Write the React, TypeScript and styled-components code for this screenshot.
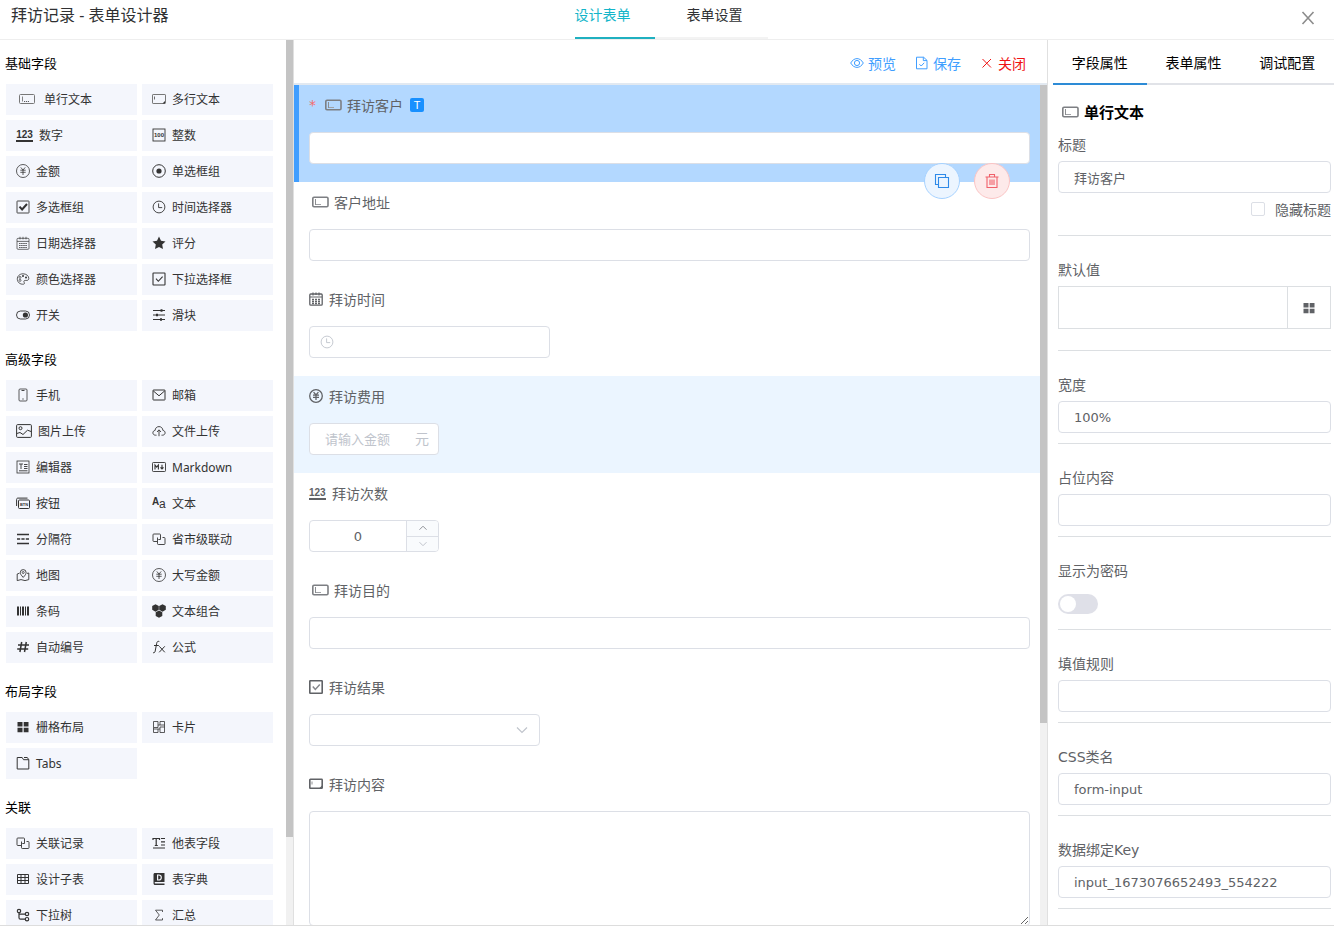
import React, { ReactNode } from 'react';
import styled, { createGlobalStyle, css } from 'styled-components';

const sans = `"Noto Sans", "Noto Sans CJK SC", sans-serif`;
const wide = `"DejaVu Sans", "Noto Sans CJK SC", sans-serif`;

const GlobalStyle = createGlobalStyle`
  *, *::before, *::after { box-sizing: border-box; }
  body { margin: 0; background: #fff; color: #303133; font-family: ${sans}; font-size: 14px; }
  h1, h2, h3, ul { margin: 0; padding: 0; font-weight: 400; }
  button, input, select, textarea { font: inherit; color: inherit; margin: 0; }
  button { cursor: pointer; }
`;

/* ---------- icons ---------- */

const Svg = styled.svg`
  display: block;
  flex: none;
  overflow: visible;
  fill: none;
  stroke: currentColor;
  stroke-width: 1;
`;

const solid = { fill: 'currentColor', stroke: 'none' };
const label = { fontFamily: 'Liberation Sans', fontWeight: 700 };

type Glyph = { w: number; h: number; body: ReactNode };

const glyphs: Record<string, Glyph> = {
  line: {
    w: 17, h: 12,
    body: (
      <>
        <rect x=".5" y="1.5" width="15" height="9" rx="1" stroke="#777" />
        <path d="M3.5 3.5v5" stroke="#777" strokeWidth=".9" />
        <path d="M5 8.5h5" strokeWidth=".8" strokeDasharray="1.2 .8" />
      </>
    ),
  },
  lineBold: {
    w: 17, h: 12,
    body: (
      <>
        <rect x=".8" y="1.3" width="15.2" height="9.4" rx="1.2" stroke="#7d7f83" strokeWidth="1.6" />
        <path d="M3.5 3v6" stroke="#8b8d91" />
        <path d="M4 8.5h5" stroke="#a0a2a6" />
      </>
    ),
  },
  area: {
    w: 14, h: 12,
    body: (
      <>
        <rect x=".5" y="1.5" width="13" height="9" rx=".6" stroke="#777" />
        <path d="M2.5 3.5v3" strokeWidth=".7" />
        <path d="M13 8v2.5h-2.5z" {...solid} />
      </>
    ),
  },
  areaBold: {
    w: 14, h: 12,
    body: (
      <>
        <rect x=".8" y="1.3" width="12.4" height="9" rx=".6" strokeWidth="1.6" />
        <path d="M3 3.5v3" strokeWidth=".7" />
        <path d="M13 7.5v3h-3z" {...solid} />
      </>
    ),
  },
  hundred: {
    w: 14, h: 14,
    body: (
      <>
        <rect x="1" y="1" width="12" height="12" strokeWidth=".9" />
        <text x="7" y="9.2" textAnchor="middle" fontSize="6" {...label} {...solid}>100</text>
      </>
    ),
  },
  yen: {
    w: 14, h: 14,
    body: (
      <>
        <circle cx="7" cy="7" r="6.5" strokeWidth=".8" />
        <path d="M4.8 3.4 7 6l2.2-2.6M7 6v5M4.3 6.2h5.4M4.3 8.3h5.4" strokeWidth=".8" />
      </>
    ),
  },
  yenBold: {
    w: 14, h: 14,
    body: (
      <>
        <circle cx="7" cy="7" r="6.3" strokeWidth="1.3" />
        <path d="M4.6 3.2 7 6l2.4-2.8M7 6v5M4 6.2h6M4 8.3h6" strokeWidth="1.3" />
      </>
    ),
  },
  radio: {
    w: 14, h: 14,
    body: (
      <>
        <circle cx="7" cy="7" r="6.3" />
        <circle cx="7" cy="7" r="2.6" {...solid} />
      </>
    ),
  },
  check: {
    w: 14, h: 14,
    body: (
      <>
        <rect x="1" y="1" width="12" height="12" rx=".5" strokeWidth=".9" />
        <path d="m3.5 6.6 2.6 2.8L11 4" strokeWidth="2" />
      </>
    ),
  },
  clock: {
    w: 14, h: 14,
    body: (
      <>
        <circle cx="7" cy="7" r="5.9" strokeWidth=".9" />
        <path d="M6.6 3.4v4.2h3.6" strokeWidth=".9" />
      </>
    ),
  },
  calendar: {
    w: 14, h: 14,
    body: (
      <>
        <rect x="1" y="2.3" width="12" height="11" rx="1" strokeWidth=".7" />
        <path d="M1 5.4h12M4 .8v2.6M7 .8v2.6M10 .8v2.6" strokeWidth=".7" />
        <path d="M3 7.5h8M3 9.5h8M3 11.5h8" strokeWidth=".8" strokeDasharray="1.6 .5" />
      </>
    ),
  },
  calendarBold: {
    w: 14, h: 14,
    body: (
      <>
        <rect x=".8" y="2" width="12.4" height="11.2" rx="1" strokeWidth="1.3" />
        <path d="M1 5h12M4 .5v3M10 .5v3M7 .5v2.5" strokeWidth="1.2" />
        <path d="M3 7.5h8M3 9.5h8M3 11.5h8" strokeWidth="1.3" strokeDasharray="2 1" />
      </>
    ),
  },
  star: {
    w: 14, h: 14,
    body: <path d="m7 .6 2 4.2 4.5.6-3.3 3.2.8 4.5L7 10.9l-4 2.2.8-4.5L.5 5.4 5 4.8z" {...solid} />,
  },
  palette: {
    w: 14, h: 14,
    body: (
      <>
        <path d="M7.6 12.2C4 12.6 1.4 10.2 1.3 7.2 1.2 4 3.8 1.8 7 1.8s5.8 2 5.8 4.6c0 1.9-1.5 2.2-3 2-1.7-.2-2.3.8-1.7 1.8.5.9.5 1.8-.5 2z" strokeWidth=".8" />
        <circle cx="4" cy="8.4" r="1" strokeWidth=".7" />
        <circle cx="4" cy="5.4" r="1" strokeWidth=".7" />
        <circle cx="7" cy="4" r="1" {...solid} />
        <circle cx="10" cy="5.4" r="1" {...solid} />
      </>
    ),
  },
  checkThin: {
    w: 14, h: 14,
    body: (
      <>
        <rect x="1" y="1" width="12" height="12" rx=".5" strokeWidth="1.1" />
        <path d="m4 6.7 2.3 2.6 4.3-4.7" strokeWidth="1.1" />
      </>
    ),
  },
  checkGrey: {
    w: 14, h: 14,
    body: (
      <>
        <rect x=".8" y=".8" width="12.4" height="12.4" rx=".5" strokeWidth="1.6" />
        <path d="m3.8 6.6 2.5 2.8 4.5-5" stroke="#85878c" strokeWidth="1.5" />
      </>
    ),
  },
  toggle: {
    w: 14, h: 14,
    body: (
      <>
        <rect x=".5" y="3" width="13" height="8" rx="4" strokeWidth=".9" />
        <circle cx="9.4" cy="7" r="2.6" {...solid} />
      </>
    ),
  },
  slider: {
    w: 14, h: 14,
    body: (
      <>
        <path d="M1 2.5h12M1 7h12M1 11.5h12" />
        <path d="M8.5 1.2h2v2.6h-2zM4 5.7h2v2.6H4zM8 10.2h2v2.6H8z" {...solid} />
      </>
    ),
  },
  phone: {
    w: 14, h: 14,
    body: (
      <>
        <rect x="3" y="1" width="8" height="12" rx="1" strokeWidth=".8" />
        <path d="M5.5 2.5h3M6.3 11h1.4" strokeWidth=".9" />
      </>
    ),
  },
  mail: {
    w: 14, h: 14,
    body: (
      <>
        <rect x="1" y="2" width="12" height="10" rx=".5" />
        <path d="m1.2 2.8 5.8 5 5.8-5" />
      </>
    ),
  },
  image: {
    w: 16, h: 14,
    body: (
      <>
        <rect x=".6" y=".6" width="14.8" height="12.8" rx="1" />
        <circle cx="4.5" cy="4.2" r="1.5" />
        <path d="m.8 9.5 3.2-1 3 2 4.5-4.3 3.8 1.4" />
      </>
    ),
  },
  cloud: {
    w: 14, h: 14,
    body: (
      <>
        <path d="M4.5 11.2H3.6C2 11.2.9 10.2.9 8.8c0-1.3.9-2.2 2.2-2.4C3.2 4.2 4.8 2.6 7 2.6s3.8 1.6 3.9 3.8c1.3.2 2.2 1.1 2.2 2.4 0 1.4-1.1 2.4-2.7 2.4h-.9" strokeWidth=".9" />
        <path d="M7 12.2V6M5 8l2-2.2L9 8" strokeWidth=".9" />
      </>
    ),
  },
  editor: {
    w: 14, h: 14,
    body: (
      <>
        <rect x="1" y="1" width="12" height="12" strokeWidth=".8" />
        <path d="M3 4h4M5 4v5M8 4.5h3.5M8 6.5h3.5M8 8.5h3.5M3 10.8h8.5" strokeWidth=".9" />
      </>
    ),
  },
  markdown: {
    w: 14, h: 14,
    body: (
      <>
        <rect x=".5" y="2.5" width="13" height="9" rx=".8" strokeWidth=".9" />
        <path d="M3 9.5V5l1.7 2.2L6.4 5v4.5M10 4.7v4.2M8.5 7.4 10 9l1.5-1.6" strokeWidth="1.1" />
      </>
    ),
  },
  btn: {
    w: 14, h: 14,
    body: (
      <>
        <path d="M.6 10V3.5c0-1 .5-1.4 1.4-1.4h9.5" />
        <rect x="2.5" y="4" width="11" height="8.5" rx="1" />
        <text x="8" y="10" textAnchor="middle" fontSize="4" {...label} {...solid}>BTN</text>
      </>
    ),
  },
  aa: {
    w: 14, h: 16,
    body: (
      <>
        <text x="0" y="10" fontSize="10" fontFamily="Liberation Sans" fontWeight="700" {...solid}>A</text>
        <text x="7" y="13" fontSize="12" fontFamily="Liberation Sans" {...solid}>a</text>
      </>
    ),
  },
  divider: {
    w: 14, h: 14,
    body: (
      <>
        <path d="M1 2.5h12M1 11.5h12" strokeWidth="1.4" />
        <path d="M1 7h12" strokeWidth="1.4" strokeDasharray="3.2 1.2" />
      </>
    ),
  },
  linkage: {
    w: 14, h: 14,
    body: (
      <path
        d="M5 9.5H1.8c-.5 0-.8-.3-.8-.8V2.8c0-.5.3-.8.8-.8h5.9c.5 0 .8.3.8.8v4.7H6.3M10.500 5.500h1.700c.5 0 .8.300.8.800v5.400c0 .5-.3.800-.8.800H6.300c-.5 0-.8-.3-.8-.8V5.500"
        strokeWidth=".9"
      />
    ),
  },
  map: {
    w: 14, h: 14,
    body: (
      <>
        <path d="M3.5 5.2 1.2 6v6.6l3.8-1 4 1 3.800-1V5l-1.800.4" strokeWidth=".9" />
        <path d="M7.2 9.4C5 7 4.3 5.900 4.300 4.500a2.900 2.900 0 0 1 5.800 0c0 1.400-.7 2.500-2.900 4.900z" strokeWidth=".9" />
        <circle cx="7.2" cy="4.5" r="1" strokeWidth=".8" />
      </>
    ),
  },
  barcode: {
    w: 14, h: 14,
    body: <path d="M1 2.5h2v9H1zM4 2.5h1v9H4zM6 2.5h2v9H6zM9 2.5h1v9H9zM11 2.5h2v9h-2z" {...solid} />,
  },
  combo: {
    w: 14, h: 14,
    body: (
      <path
        d="m3.5.3 3.3 1.8v3.7L3.5 7.7.2 5.8V2.1zM10.5.3l3.3 1.8v3.7l-3.3 1.9-3.3-1.9V2.1zM7 6.5l3.3 1.8V12L7 13.8 3.7 12V8.3z"
        {...solid}
      />
    ),
  },
  hash: {
    w: 14, h: 14,
    body: <path d="M5.7 2 3.9 12M10.3 2 8.5 12M2 5h11M1.2 9h11" strokeWidth="1.5" />,
  },
  fx: {
    w: 14, h: 14,
    body: (
      <>
        <path d="M7.3 1.5C5.7.9 5 1.8 4.7 3.3L3.2 11c-.3 1.5-1 2.1-2.2 1.6M2 5.5h4.8" />
        <path d="m7.3 6.3 5.5 6M12.8 6.3l-5.6 6" />
      </>
    ),
  },
  grid: {
    w: 14, h: 14,
    body: <path d="M1.5 2h5v4.5h-5zM7.7 2h4.8v4.5H7.7zM1.5 7.7h5v4.5h-5zM7.7 7.7h4.8v4.5H7.7z" {...solid} />,
  },
  card: {
    w: 14, h: 14,
    body: (
      <path
        d="M1.5 1.5H6v6H1.5zM8 1.5h4.5V5H8zM1.5 9H6v3.5H1.5zM8 7h4.5v5.5H8zM1.5 7.5V9M12.5 5v2M6 5h2M6 9h2"
        strokeWidth=".8"
      />
    ),
  },
  tabs: {
    w: 14, h: 14,
    body: <path d="M1.2 1.5h5l1.3 2.2h5.3V13H1.2zM8 1.5h3.3l1.5 2.2" />,
  },
  tfield: {
    w: 14, h: 14,
    body: (
      <>
        <path d="M1 4V2.5h6.5V4M4.2 2.5v7M2.8 9.5h3M1 12h12" strokeWidth="1.2" />
        <path d="M9 2.5h4M9 5.8h4M9 9h4" strokeWidth="1.2" />
      </>
    ),
  },
  table: {
    w: 14, h: 14,
    body: <path d="M1.5 2.5h11v9h-11zM1.5 5.5h11M1.5 8.5h11M5 2.5v9M9 2.5v9" />,
  },
  dict: {
    w: 14, h: 14,
    body: (
      <>
        <path d="M3 1h9.5v9H3.3c-.9 0-.9 1.4 0 1.4h9.2V13H3.2c-1 0-1.7-.7-1.7-1.8V2.6C1.5 1.6 2 1 3 1z" {...solid} />
        <path d="M5.6 3v5h1.2c1.7 0 2.5-.9 2.5-2.5S8.5 3 6.8 3z" stroke="#f4f5fb" strokeWidth="1.2" />
      </>
    ),
  },
  tree: {
    w: 14, h: 14,
    body: (
      <>
        <circle cx="3" cy="3" r="1.7" strokeWidth="1.2" />
        <circle cx="11" cy="6" r="1.7" strokeWidth="1.2" />
        <circle cx="11" cy="11.2" r="1.7" strokeWidth="1.2" />
        <path d="M3 4.7v5c0 1 .5 1.5 1.5 1.5h4.8M3 6.2h6.3" strokeWidth="1.2" />
      </>
    ),
  },
  sum: {
    w: 14, h: 14,
    body: <path d="M10.5 4V2.2h-7L7.3 7l-3.8 5h7v-1.8" strokeWidth=".8" />,
  },
  eye: {
    w: 14, h: 14,
    body: (
      <>
        <path d="M.7 7C2.3 4.2 4.5 2.6 7 2.6s4.7 1.6 6.3 4.4c-1.6 2.8-3.8 4.4-6.3 4.4S2.3 9.8.7 7z" />
        <circle cx="7" cy="7" r="2.6" />
      </>
    ),
  },
  save: {
    w: 14, h: 14,
    body: <path d="M1.5 1.2h7.1L12 4.4v8.4H1.5zM8.3 1.2v3.4H12M4.4 8.2 6.200 10l3-3.2" />,
  },
  cross: { w: 14, h: 14, body: <path d="m2.5 3 8.5 8.5M11 3l-8.500 8.500" /> },
  close: { w: 14, h: 14, body: <path d="m1.5 1 11 12M12.5 1l-11 12" strokeWidth="1.6" /> },
  copy: {
    w: 16, h: 16,
    body: <path d="M4.5 4.5h10v10h-10zM4.5 11.5h-3v-10h10v3" strokeWidth="1.1" />,
  },
  trash: {
    w: 16, h: 16,
    body: <path d="M1.5 4h13M5.5 3.8V1.5h5v2.3M3 4v10.5h10V4M6 6.5V12M8 6.5V12M10 6.5V12" strokeWidth="1.1" />,
  },
  up: { w: 10, h: 6, body: <path d="m1.5 4.7 3.5-3.5 3.5 3.5" /> },
  down: { w: 10, h: 6, body: <path d="m1.5 1.2 3.5 3.5 3.5-3.5" /> },
  chevron: { w: 12, h: 8, body: <path d="m1 1.5 5 5 5-5" strokeWidth="1.2" /> },
};

const Digits = styled.span`
  width: 17px;
  border-bottom: 2px solid currentColor;
  font: 700 10px/11px "Liberation Sans", sans-serif;
`;

function Icon({ name }: { name: string }) {
  if (name === 'digits') return <Digits aria-hidden="true">123</Digits>;
  const { w, h, body } = glyphs[name];
  return (
    <Svg width={w} height={h} viewBox={`0 0 ${w} ${h}`} aria-hidden="true">
      {body}
    </Svg>
  );
}

/* ---------- shell ---------- */

const Shell = styled.div`
  display: flex;
  flex-direction: column;
  height: 100vh;
  padding-bottom: 5px;
  overflow: hidden;
`;

const Header = styled.header`
  display: grid;
  grid-template-columns: 1fr auto 1fr;
  flex: none;
  height: 40px;
  border-bottom: 1px solid #eee;
`;

const Title = styled.h1`
  padding-left: 11px;
  font-size: 16px;
  line-height: 30px;
`;

const ModeTabs = styled.div`
  display: flex;
  padding-left: 8px;
`;

const ModeTab = styled.button<{ $active?: boolean }>`
  height: 39px;
  padding: ${(p) => (p.$active ? '0 24px 9px 0' : '0 25px 9px 32px')};
  border: 0;
  border-bottom: 2px solid ${(p) => (p.$active ? '#1fb0c0' : '#f3f3f3')};
  background: none;
  color: ${(p) => (p.$active ? '#13b5c9' : '#303133')};
`;

const CloseButton = styled.button`
  justify-self: end;
  display: flex;
  padding: 11px 19px 0 0;
  border: 0;
  background: none;
  color: #8c8c8c;
`;

const Body = styled.div`
  display: flex;
  flex: 1;
  min-height: 0;
  border-bottom: 1px solid #ddd;
`;

const Track = styled.div`
  flex: none;
  width: 7px;
  background: #f1f1f1;
`;

const Thumb = styled.div<{ $share: number }>`
  height: ${(p) => p.$share}%;
  background: #c4c4c4;
`;

/* ---------- palette ---------- */

const Sidebar = styled.aside`
  display: flex;
  flex: none;
  width: 294px;
  border-right: 1px solid #e0e0e0;
`;

const Palette = styled.nav`
  display: flex;
  flex: 1;
  flex-direction: column;
  gap: 18px;
  padding: 13px 13px 0 6px;
  overflow: hidden;
`;

const Group = styled.section`
  flex: none;
`;

const GroupTitle = styled.h2`
  margin: 0 0 11px -1px;
  color: #000;
  font-size: 13px;
  line-height: 20px;
`;

const Items = styled.ul`
  display: grid;
  grid-template-columns: 1fr 1fr;
  gap: 5px;
  list-style: none;
`;

const Item = styled.button<{ $loose?: boolean }>`
  display: flex;
  align-items: center;
  gap: ${(p) => (p.$loose ? 8 : 6)}px;
  width: 100%;
  height: 31px;
  padding: 0 0 1px ${(p) => (p.$loose ? 13 : 10)}px;
  border: 0;
  background: #f4f6fc;
  color: #333;
  font-size: 12px;
  white-space: nowrap;
`;

const groups: { title: string; items: [string, string][] }[] = [
  {
    title: '基础字段',
    items: [
      ['line', '单行文本'], ['area', '多行文本'], ['digits', '数字'], ['hundred', '整数'],
      ['yen', '金额'], ['radio', '单选框组'], ['check', '多选框组'], ['clock', '时间选择器'],
      ['calendar', '日期选择器'], ['star', '评分'], ['palette', '颜色选择器'], ['checkThin', '下拉选择框'],
      ['toggle', '开关'], ['slider', '滑块'],
    ],
  },
  {
    title: '高级字段',
    items: [
      ['phone', '手机'], ['mail', '邮箱'], ['image', '图片上传'], ['cloud', '文件上传'],
      ['editor', '编辑器'], ['markdown', 'Markdown'], ['btn', '按钮'], ['aa', '文本'],
      ['divider', '分隔符'], ['linkage', '省市级联动'], ['map', '地图'], ['yen', '大写金额'],
      ['barcode', '条码'], ['combo', '文本组合'], ['hash', '自动编号'], ['fx', '公式'],
    ],
  },
  { title: '布局字段', items: [['grid', '栅格布局'], ['card', '卡片'], ['tabs', 'Tabs']] },
  {
    title: '关联',
    items: [
      ['linkage', '关联记录'], ['tfield', '他表字段'], ['table', '设计子表'], ['dict', '表字典'],
      ['tree', '下拉树'], ['sum', '汇总'],
    ],
  },
];

/* ---------- canvas ---------- */

const Canvas = styled.main`
  display: flex;
  flex: 1;
  flex-direction: column;
  min-width: 0;
`;

const Toolbar = styled.div`
  display: flex;
  flex: none;
  justify-content: flex-end;
  gap: 19px;
  height: 45px;
  padding: 2px 21px 0 0;
  border-bottom: 2px solid #e2e9f1;
`;

const Action = styled.button<{ $color: string }>`
  display: flex;
  align-items: center;
  gap: 4px;
  padding: 0;
  border: 0;
  background: none;
  color: ${(p) => p.$color};
`;

const CanvasScroll = styled.div`
  display: flex;
  flex: 1;
  min-height: 0;
`;

const Fields = styled.div`
  flex: 1;
  min-width: 0;
  overflow: hidden;
`;

const Field = styled.div<{ $selected?: boolean; $hovered?: boolean }>`
  position: relative;
  padding: 0 10px 18px 15px;
  ${(p) => p.$hovered && css`background: #ebf5ff;`}
  ${(p) => p.$selected && css`
    padding-left: 10px;
    border-left: 5px solid #409eff;
    background: #b3d8ff;
  `}
`;

const FieldLabel = styled.label<{ $inset?: boolean }>`
  display: flex;
  align-items: center;
  gap: ${(p) => (p.$inset ? 5 : 6)}px;
  height: 40px;
  margin-bottom: 7px;
  padding-left: ${(p) => (p.$inset ? 3 : 0)}px;
  color: #606266;
  font-family: ${wide};
`;

const Required = styled.span`
  width: 11px;
  margin-left: -3px;
  color: #f56c6c;
`;

const TypeBadge = styled.span`
  width: 14px;
  height: 14px;
  margin-left: 2px;
  border-radius: 2px;
  background: #1890ff;
  color: #fff;
  font: 11px/14px "Liberation Sans", sans-serif;
  text-align: center;
`;

const box = css`
  border: 1px solid #dcdfe6;
  border-radius: 4px;
  background: #fff;
  color: #606266;
  outline: 0;
`;

const TextInput = styled.input`
  ${box}
  display: block;
  width: 100%;
  height: 32px;
  padding: 0 15px;
  font: 13px ${wide};
`;

const TextArea = styled.textarea`
  ${box}
  display: block;
  width: 100%;
  height: 115px;
  padding: 5px 15px;
  resize: vertical;
`;

const Compound = styled.div<{ $width: number }>`
  ${box}
  display: flex;
  align-items: center;
  width: ${(p) => p.$width}px;
  height: 32px;
  color: #c0c4cc;
  overflow: hidden;
`;

const BareInput = styled.input<{ $centered?: boolean }>`
  flex: 1;
  min-width: 0;
  height: 30px;
  padding: 0;
  border: 0;
  outline: 0;
  background: none;
  color: #606266;
  font: 13px ${wide};
  text-align: ${(p) => (p.$centered ? 'center' : 'left')};
  &::placeholder { color: #c0c4cc; }
`;

const Lead = styled.span<{ $size: number }>`
  display: flex;
  flex: none;
  width: ${(p) => p.$size}px;
  padding-left: 10px;
`;

const Unit = styled.span`
  padding: 0 9px 2px 0;
`;

const Steps = styled.div`
  display: flex;
  flex-direction: column;
  flex: none;
  width: 32px;
  height: 30px;
  border-left: 1px solid #dcdfe6;
`;

const Step = styled.button`
  display: flex;
  flex: 1;
  align-items: center;
  justify-content: center;
  padding: 0;
  border: 0;
  background: #f9fbfd;
  color: #909399;
  & + & { border-top: 1px solid #dcdfe6; color: #c0c4cc; }
`;

const SelectBox = styled.select`
  flex: 1;
  height: 30px;
  margin-right: -30px;
  padding: 0 30px 0 15px;
  border: 0;
  outline: 0;
  appearance: none;
  background: none;
`;

const SelectArrow = styled.span`
  display: flex;
  width: 30px;
  padding-left: 7px;
  pointer-events: none;
`;

const FloatActions = styled.div`
  position: absolute;
  right: 30px;
  bottom: -17px;
  z-index: 1;
  display: flex;
  gap: 14px;
`;

const RoundButton = styled.button<{ $danger?: boolean }>`
  display: flex;
  align-items: center;
  justify-content: center;
  width: 36px;
  height: 36px;
  padding: 0;
  border: 1px solid ${(p) => (p.$danger ? '#fbc4c4' : '#a6d2ff')};
  border-radius: 50%;
  background: ${(p) => (p.$danger ? '#fdeaea' : '#ecf5ff')};
  color: ${(p) => (p.$danger ? '#f0606a' : '#2f8ae8')};
`;

/* ---------- inspector ---------- */

const Inspector = styled.aside`
  flex: none;
  width: 287px;
  border-left: 1px solid #e0e0e0;
  overflow: hidden;
`;

const InspectorTabs = styled.div`
  display: flex;
  height: 45px;
  padding-left: 5px;
`;

const InspectorTab = styled.button<{ $active?: boolean }>`
  flex: 1;
  padding: 0;
  border: 0;
  border-bottom: 2px solid ${(p) => (p.$active ? '#2d8bd6' : '#e1e3e8')};
  background: none;
  color: #000;
`;

const Props = styled.div`
  padding: 12px 3px 0 10px;
`;

const TypeName = styled.h2`
  display: flex;
  align-items: center;
  gap: 5px;
  height: 30px;
  margin-bottom: 2px;
  padding-left: 4px;
  color: #777;
  font-size: 15px;
  line-height: 20px;
  b { color: #000; }
`;

const Prop = styled.div<{ $first?: boolean; $roomy?: boolean }>`
  padding: ${(p) => (p.$first ? 0 : 18)}px 0 ${(p) => (p.$roomy ? 21 : 10)}px;
  border-bottom: 1px solid #dcdfe2;
`;

const PropLabel = styled.label`
  display: block;
  height: 32px;
  color: #606266;
  font-family: ${wide};
  line-height: 32px;
`;

const HideTitle = styled.label`
  display: flex;
  align-items: center;
  justify-content: flex-end;
  gap: 10px;
  height: 32px;
  color: #606266;
`;

const Checkbox = styled.input`
  width: 14px;
  height: 14px;
  border: 1px solid #dcdfe6;
  border-radius: 2px;
  appearance: none;
`;

const DefaultRow = styled.div`
  display: flex;
  height: 43px;
  border: 1px solid #dcdfe2;
`;

const DefaultButton = styled.button`
  display: flex;
  align-items: center;
  justify-content: center;
  width: 43px;
  padding: 0;
  border: 0;
  border-left: 1px solid #dcdfe2;
  background: none;
  color: #606266;
`;

const SwitchRow = styled.div`
  display: flex;
  align-items: center;
  height: 32px;
  padding-top: 2px;
`;

const Switch = styled.input`
  width: 40px;
  height: 20px;
  padding: 2px;
  border-radius: 10px;
  background: #dfe0e8;
  appearance: none;
  &::before {
    content: '';
    display: block;
    width: 16px;
    height: 16px;
    border-radius: 50%;
    background: #fff;
  }
`;

const textProps = [
  { id: 'rule', label: '填值规则', value: '' },
  { id: 'css', label: 'CSS类名', value: 'form-input' },
  { id: 'key', label: '数据绑定Key', value: 'input_1673076652493_554222' },
];

export default function App() {
  return (
    <>
      <GlobalStyle />
      <Shell>
        <Header>
          <Title>拜访记录 - 表单设计器</Title>
          <ModeTabs>
            <ModeTab $active>设计表单</ModeTab>
            <ModeTab>表单设置</ModeTab>
          </ModeTabs>
          <CloseButton aria-label="关闭窗口"><Icon name="close" /></CloseButton>
        </Header>
        <Body>
          <Sidebar>
            <Palette>
              {groups.map((group) => (
                <Group key={group.title}>
                  <GroupTitle>{group.title}</GroupTitle>
                  <Items>
                    {group.items.map(([icon, text]) => (
                      <li key={text}>
                        <Item $loose={icon === 'line'}>
                          <Icon name={icon} />
                          {text}
                        </Item>
                      </li>
                    ))}
                  </Items>
                </Group>
              ))}
            </Palette>
            <Track><Thumb $share={90} /></Track>
          </Sidebar>

          <Canvas>
            <Toolbar>
              <Action $color="#409eff"><Icon name="eye" />预览</Action>
              <Action $color="#409eff"><Icon name="save" />保存</Action>
              <Action $color="#f01414"><Icon name="cross" />关闭</Action>
            </Toolbar>
            <CanvasScroll>
              <Fields>
                <Field $selected>
                  <FieldLabel htmlFor="customer" $inset>
                    <Required>*</Required>
                    <Icon name="lineBold" />
                    拜访客户
                    <TypeBadge>T</TypeBadge>
                  </FieldLabel>
                  <TextInput id="customer" />
                  <FloatActions>
                    <RoundButton aria-label="复制"><Icon name="copy" /></RoundButton>
                    <RoundButton $danger aria-label="删除"><Icon name="trash" /></RoundButton>
                  </FloatActions>
                </Field>
                <Field>
                  <FieldLabel htmlFor="address" $inset><Icon name="lineBold" />客户地址</FieldLabel>
                  <TextInput id="address" />
                </Field>
                <Field>
                  <FieldLabel htmlFor="time"><Icon name="calendarBold" />拜访时间</FieldLabel>
                  <Compound $width={241}>
                    <Lead $size={30}><Icon name="clock" /></Lead>
                    <BareInput id="time" />
                  </Compound>
                </Field>
                <Field $hovered>
                  <FieldLabel htmlFor="cost"><Icon name="yenBold" />拜访费用</FieldLabel>
                  <Compound $width={130}>
                    <Lead $size={15} />
                    <BareInput id="cost" placeholder="请输入金额" />
                    <Unit>元</Unit>
                  </Compound>
                </Field>
                <Field>
                  <FieldLabel htmlFor="count"><Icon name="digits" />拜访次数</FieldLabel>
                  <Compound $width={130}>
                    <BareInput id="count" $centered defaultValue="0" />
                    <Steps>
                      <Step aria-label="增加"><Icon name="up" /></Step>
                      <Step aria-label="减少"><Icon name="down" /></Step>
                    </Steps>
                  </Compound>
                </Field>
                <Field>
                  <FieldLabel htmlFor="purpose" $inset><Icon name="lineBold" />拜访目的</FieldLabel>
                  <TextInput id="purpose" />
                </Field>
                <Field>
                  <FieldLabel htmlFor="result"><Icon name="checkGrey" />拜访结果</FieldLabel>
                  <Compound $width={231}>
                    <SelectBox id="result" />
                    <SelectArrow><Icon name="chevron" /></SelectArrow>
                  </Compound>
                </Field>
                <Field>
                  <FieldLabel htmlFor="content"><Icon name="areaBold" />拜访内容</FieldLabel>
                  <TextArea id="content" />
                </Field>
              </Fields>
              <Track><Thumb $share={76} /></Track>
            </CanvasScroll>
          </Canvas>

          <Inspector>
            <InspectorTabs>
              <InspectorTab $active>字段属性</InspectorTab>
              <InspectorTab>表单属性</InspectorTab>
              <InspectorTab>调试配置</InspectorTab>
            </InspectorTabs>
            <Props>
              <TypeName><Icon name="lineBold" /><b>单行文本</b></TypeName>
              <Prop $first>
                <PropLabel htmlFor="p-title">标题</PropLabel>
                <TextInput id="p-title" defaultValue="拜访客户" />
                <HideTitle><Checkbox type="checkbox" />隐藏标题</HideTitle>
              </Prop>
              <Prop $roomy>
                <PropLabel htmlFor="p-default">默认值</PropLabel>
                <DefaultRow>
                  <BareInput id="p-default" />
                  <DefaultButton aria-label="选择默认值"><Icon name="grid" /></DefaultButton>
                </DefaultRow>
              </Prop>
              <Prop>
                <PropLabel htmlFor="p-width">宽度</PropLabel>
                <TextInput id="p-width" defaultValue="100%" />
              </Prop>
              <Prop>
                <PropLabel htmlFor="p-placeholder">占位内容</PropLabel>
                <TextInput id="p-placeholder" />
              </Prop>
              <Prop>
                <PropLabel htmlFor="p-password">显示为密码</PropLabel>
                <SwitchRow><Switch id="p-password" type="checkbox" role="switch" /></SwitchRow>
              </Prop>
              {textProps.map((prop) => (
                <Prop key={prop.id}>
                  <PropLabel htmlFor={prop.id}>{prop.label}</PropLabel>
                  <TextInput id={prop.id} defaultValue={prop.value} />
                </Prop>
              ))}
            </Props>
          </Inspector>
        </Body>
      </Shell>
    </>
  );
}
